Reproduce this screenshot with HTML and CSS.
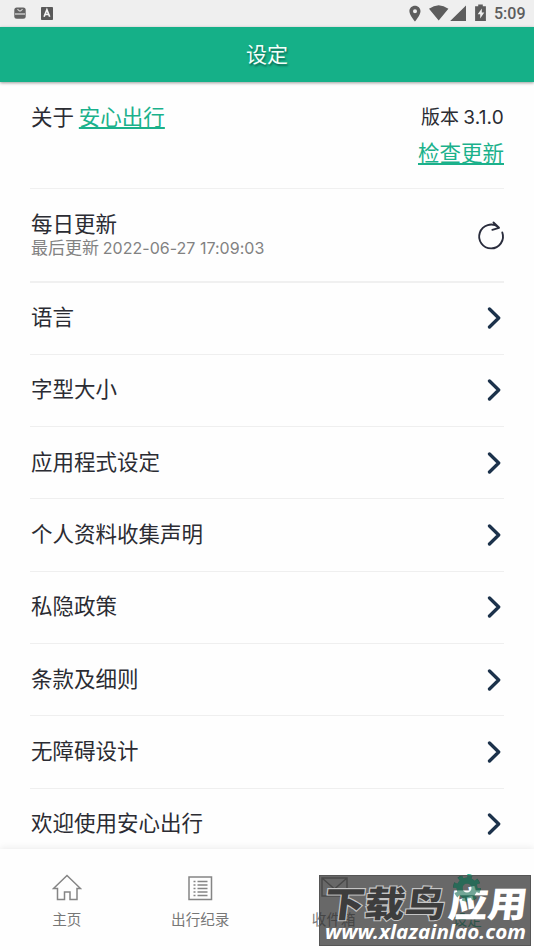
FILE: index.html
```html
<!DOCTYPE html>
<html lang="zh-CN">
<head>
<meta charset="utf-8">
<meta name="viewport" content="width=device-width, initial-scale=1">
<title>设定</title>
<link rel="stylesheet" href="styles.css">
</head>
<body>
<div class="screen">
  <div class="status">
    <svg class="status-left" width="60" height="27" viewBox="0 0 60 27">
      <rect x="14.3" y="7.5" width="11.4" height="11.2" rx="2.5" fill="#636363"/>
      <path d="M17.5 9q2.5 4 5 0M15 14h10" fill="none" stroke="#c9c9c9" stroke-width="1.3"/>
      <rect x="41" y="7" width="12" height="13" rx=".8" fill="#595959"/>
      <path d="M44.1 16.7l2.8-7 2.8 7M45.2 14.5h3.5" fill="none" stroke="#f4f4f4" stroke-width="1.7"/>
    </svg>
    <svg class="status-right" width="84" height="27" viewBox="406 0 84 27" fill="#5d5d5d">
      <path fill-rule="evenodd" d="M415 5.8c-3.2 0-5.6 2.4-5.6 5.5 0 4 5.6 10.2 5.6 10.2s5.5-6.200 5.500-10.200c0-3.100-2.400-5.500-5.500-5.500zm0 3.500a2 2 0 1 1 0 4 2 2 0 0 1 0-4z"/>
      <path d="M429 8.700q9.700-7 19.400 0L438.700 20.500zM466 5.500V21H450.200z"/>
      <path fill-rule="evenodd" d="M478.200 4.500h4.600v1.700h3.100v14.700h-10.800V6.200h3.100zM481.800 8.500l-4.100 5.700h2.500v4.300l4.100-6h-2.500z"/>
    </svg>
    <span class="clock">5:09</span>
  </div>
  <header class="header">设定</header>
  <main class="content">
    <section class="about">
      <div>关于 <a class="link">安心出行</a></div>
      <div class="version"><span class="ver">版本 <span class="latin">3.1.0</span></span><a class="link">检查更新</a></div>
    </section>
    <section class="daily">
      <div><div class="daily-title">每日更新</div><div class="daily-sub">最后更新 <span class="latin date">2022-06-27 17:09:03</span></div></div>
      <svg class="refresh" width="30" height="32" viewBox="476 220 30 32" fill="none" stroke="#292c3c" stroke-width="1.900" stroke-linecap="round" stroke-linejoin="round"><path d="M502.300 232.500A11.900 11.900 0 1 1 498.500 227.200M493.500 222.500L499 227.800L492.300 229.800"/></svg>
    </section>
    <div class="row"><span>语言</span><svg class="chev" viewBox="0 0 14 24"><path d="M2.500 3L11.700 12L2.500 21"/></svg></div>
    <div class="row"><span>字型大小</span><svg class="chev" viewBox="0 0 14 24"><path d="M2.500 3L11.700 12L2.500 21"/></svg></div>
    <div class="row"><span>应用程式设定</span><svg class="chev" viewBox="0 0 14 24"><path d="M2.500 3L11.700 12L2.500 21"/></svg></div>
    <div class="row"><span>个人资料收集声明</span><svg class="chev" viewBox="0 0 14 24"><path d="M2.500 3L11.700 12L2.500 21"/></svg></div>
    <div class="row"><span>私隐政策</span><svg class="chev" viewBox="0 0 14 24"><path d="M2.500 3L11.700 12L2.500 21"/></svg></div>
    <div class="row"><span>条款及细则</span><svg class="chev" viewBox="0 0 14 24"><path d="M2.500 3L11.700 12L2.500 21"/></svg></div>
    <div class="row"><span>无障碍设计</span><svg class="chev" viewBox="0 0 14 24"><path d="M2.500 3L11.700 12L2.500 21"/></svg></div>
    <div class="row"><span>欢迎使用安心出行</span><svg class="chev" viewBox="0 0 14 24"><path d="M2.500 3L11.700 12L2.500 21"/></svg></div>
  </main>
  <nav class="tabs">
    <div class="tab"><svg class="icon" viewBox="0 0 30 30"><path d="M1.500 15.500L15 2.500L28.500 15.500H25V26.500H18V19H12.500V26.500H5.500V15.500Z"/></svg><span>主页</span></div>
    <div class="tab"><svg class="icon" viewBox="0 0 30 30"><path d="M4 4H26.500V26.500H4ZM8.500 8.500h2M12.500 8.500h10M8.500 12h2M12.500 12h10M8.500 15.500h2M12.500 15.500h10M8.500 19h2M12.500 19h10M8.500 22.500h2M12.500 22.500h10"/></svg><span>出行纪录</span></div>
    <div class="tab"><svg class="icon" viewBox="0 0 30 30"><path d="M3 5H28V23H3ZM3 5L15.500 16L28 5"/></svg><span>收件箱</span></div>
    <div class="tab active"><svg class="icon gear" viewBox="0 0 30 30"><circle cx="15" cy="15" r="7.500"/><circle class="teeth" cx="15" cy="15" r="12"/></svg><span>设定</span></div>
  </nav>
  <svg class="watermark" width="212" height="72" viewBox="319 875 212 72">
    <rect x="319" y="875" width="212" height="71" class="wm-bg"/>
    <rect x="319.500" y="875.500" width="211" height="70" class="wm-edge"/>
    <g transform="translate(323 917) skewX(-7) scale(1 .87)">
      <text class="wm-dark" x="0" y="0" textLength="121" lengthAdjust="spacingAndGlyphs">下载鸟</text>
      <text class="wm-light" x="124" y="0" textLength="79" lengthAdjust="spacingAndGlyphs">应用</text>
    </g>
    <g class="wm-tint">
      <circle cx="467" cy="888" r="7.500" class="tint-ring"/><circle cx="467" cy="888" r="11.500" class="tint-teeth"/>
    </g>
    <text class="wm-url" x="325" y="939" textLength="201" lengthAdjust="spacingAndGlyphs">www.xlazainlao.com</text>
  </svg>
</div>
</body>
</html>
```

FILE: styles.css
```css
* { box-sizing: border-box; }
body { margin: 0; background: #fefefe; font-family: "Noto Sans CJK SC", sans-serif; color: #2b2c33; }
.screen { position: relative; width: 534px; height: 950px; overflow: hidden; display: flex; flex-direction: column; }
.status { height: 27px; flex: none; display: flex; background: #efefef; align-items: center; }
.status-right { margin-left: auto; }
.clock { width: 44px; padding-left: 4px; font: 500 16px/27px Roboto, sans-serif; color: #5d5d5d; }
.header { position: relative; height: 55px; flex: none; background: #15b088; color: #f4fffb; font-size: 21px; line-height: 52px; text-align: center; text-shadow: 1px 2px 2px rgba(0,0,0,.4); box-shadow: 0 1px 3px rgba(0,0,0,.4); }
.content { flex: 1; min-height: 0; overflow: hidden; padding: 0 30px; font-size: 21.500px; }
.about { height: 107px; padding: 16px 0 0 1px; display: flex; justify-content: space-between; line-height: 35px; border-bottom: 1px solid #f0f0f0; }
.link { color: #1bb18b; text-decoration: underline; text-decoration-thickness: 1.500px; text-underline-offset: 2px; }
.version { display: flex; flex-direction: column; align-items: flex-end; }
.version .link { margin-top: -1px; }
.ver { font-size: 19px; }
.latin { font-family: Inter, sans-serif; }
.ver .latin { font-size: 19px; letter-spacing: .2px; }
.daily { height: 93.500px; padding-left: 1px; display: flex; justify-content: space-between; border-bottom: 2px solid #f0f0f0; }
.daily-title { padding-top: 19px; line-height: 29px; }
.daily-sub { font-size: 17px; line-height: 19px; color: #828282; }
.date { font-size: 16px; letter-spacing: .02px; }
.refresh { margin-top: 31px; margin-right: -2px; }
.row { height: 72.300px; padding: 0 0 1px 1px; display: flex; align-items: center; justify-content: space-between; border-bottom: 1.500px solid #efefef; }
.row span { margin-top: -4px; }
.chev { width: 14px; height: 24px; margin-right: 3px; margin-top: 1px; fill: none; stroke: #1c324b; stroke-width: 3.300; stroke-linecap: round; stroke-linejoin: round; }
.tabs { position: relative; height: 101px; flex: none; display: grid; grid-template-columns: repeat(4, 1fr); background: #fefefe; box-shadow: 0 -1px 7px rgba(0,0,0,.08); }
.tab { display: flex; flex-direction: column; align-items: center; padding-top: 24px; color: #777; font-size: 14.600px; line-height: 32px; }
.icon { width: 30px; height: 30px; flex: none; fill: none; stroke: #858585; stroke-width: 1.500; }
.active { color: #15b088; }
.gear { stroke: #15b088; stroke-width: 6; }
.teeth { stroke-width: 4; stroke-dasharray: 4.700 4.725; }
.watermark { position: absolute; left: 319px; top: 875px; }
.wm-bg { fill: #333; fill-opacity: .74; }
.wm-edge { fill: none; stroke: #555; stroke-width: 1; }
.wm-dark, .wm-light { font: 900 41px "Noto Sans CJK SC", sans-serif; paint-order: stroke; }
.wm-dark { fill: #3d3d3d; stroke: #c5c5c5; stroke-width: 2.500; }
.wm-light { fill: #fff; }
.wm-url { font: italic 700 20px "Noto Sans", sans-serif; fill: #fff; }
.wm-tint { fill: none; stroke: #287760; opacity: .65; }
.tint-ring { stroke-width: 6; }
.tint-teeth { stroke-width: 4; stroke-dasharray: 4.500 4.530; }
```
